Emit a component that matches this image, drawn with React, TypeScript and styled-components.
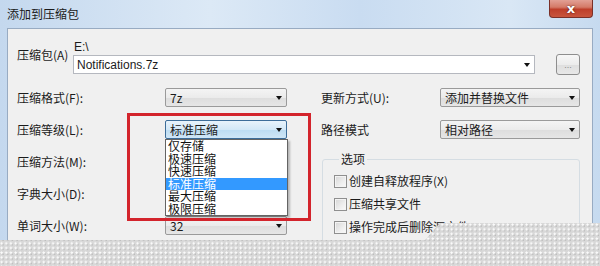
import styled, { createGlobalStyle } from 'styled-components'

const GlobalStyle = createGlobalStyle`
  body {
    margin: 0;
    font-family: "Noto Sans CJK SC", "Noto Sans", sans-serif;
  }
`

const Window = styled.div`
  position: relative;
  width: 600px;
  height: 266px;
  overflow: hidden;
  display: flex;
  flex-direction: column;
  font-size: 12px;
  color: #1b1b1b;
  background: linear-gradient(90deg, #c4d8ee 0%, #dce9f6 35%, #c9dcf1 60%, #d9e7f5 85%, #c6daef 100%);
`

const TitleBar = styled.div`
  height: 28px;
  flex-shrink: 0;
  display: flex;
  align-items: flex-start;
  justify-content: space-between;
  padding: 0 7px;
  box-sizing: border-box;
`

const Title = styled.div`
  margin-top: 7px;
  line-height: 14px;
  color: #1a1a1a;
`

const CloseButton = styled.div`
  width: 44px;
  height: 18px;
  box-sizing: border-box;
  border: 1px solid #7a3028;
  border-top: none;
  border-radius: 0 0 4px 4px;
  background: linear-gradient(#e2a095 0%, #d47a68 42%, #be3f2b 55%, #c8553d 100%);
  display: flex;
  align-items: center;
  justify-content: center;
  color: #fff;
  font-family: "DejaVu Sans", sans-serif;
  font-weight: bold;
  font-size: 13px;
  line-height: 12px;
  text-shadow: 0 0 2px #3a0d08;
`

const Panel = styled.div`
  flex: 1;
  margin: 0 7px;
  border: 1px solid #98abc2;
  border-bottom: none;
  background: #f0f0f0;
  padding: 11px 12px 0 9px;
  box-sizing: border-box;
  display: flex;
  flex-direction: column;
`

const ArchiveRow = styled.div`
  display: flex;
  align-items: flex-start;
`

const ArchiveLabel = styled.div`
  width: 56px;
  margin-top: 8px;
  line-height: 14px;
`

const ArchiveField = styled.div`
  flex: 1;
  margin-right: 21px;
  display: flex;
  flex-direction: column;
`

const PathText = styled.div`
  line-height: 14px;
  padding-left: 1px;
  font-family: "Liberation Sans", sans-serif;
`

const Combo = styled.div<{ $focus?: boolean; $editable?: boolean }>`
  position: relative;
  height: 19px;
  box-sizing: border-box;
  display: flex;
  align-items: center;
  justify-content: space-between;
  padding: 0 4px 0 4px;
  border: 1px solid ${(p) => (p.$focus ? '#3d6d99' : p.$editable ? '#b5b8bf' : '#9a9a9a')};
  border-radius: ${(p) => (p.$editable ? '0' : '2px')};
  background: ${(p) =>
    p.$editable
      ? '#fff'
      : p.$focus
        ? 'linear-gradient(#e8f3fb 0%, #d3e8f7 50%, #bcdcf2 51%, #cfe6f6 100%)'
        : 'linear-gradient(#f4f4f4 0%, #ebebeb 50%, #dddddd 51%, #e6e6e6 100%)'};
  line-height: 14px;
  white-space: nowrap;
`

const ArchiveCombo = styled(Combo)`
  margin-top: 1px;
  padding-left: 3px;
  font-family: "Liberation Sans", sans-serif;
`

const Arrow = styled.span`
  width: 0;
  height: 0;
  border-left: 3.5px solid transparent;
  border-right: 3.5px solid transparent;
  border-top: 4px solid #111;
`

const BrowseButton = styled.div`
  width: 24px;
  height: 21px;
  margin-top: 14px;
  box-sizing: border-box;
  border: 1px solid #8e8e8e;
  border-radius: 3px;
  background: linear-gradient(#f7f7f7 0%, #ececec 50%, #dedede 51%, #e8e8e8 100%);
  display: flex;
  align-items: center;
  justify-content: center;
  color: #8a8a8a;
  font-size: 9px;
  font-family: "Liberation Sans", sans-serif;
`

const Columns = styled.div`
  margin-top: 13px;
  display: flex;
  align-items: flex-start;
`

const LeftCol = styled.div`
  width: 270px;
  display: grid;
  row-gap: 13px;
`

const RightCol = styled.div`
  flex: 1;
  margin-left: 34px;
  display: flex;
  flex-direction: column;
  gap: 13px;
`

const FormRow = styled.div<{ $labelWidth: number }>`
  display: grid;
  grid-template-columns: ${(p) => p.$labelWidth}px 1fr;
  align-items: center;
  height: 19px;
`

const Label = styled.div`
  line-height: 14px;
  white-space: nowrap;
`

const SelectWrap = styled.div`
  position: relative;
`

const DropList = styled.div`
  position: absolute;
  z-index: 2;
  top: 19px;
  left: 0;
  width: 123px;
  box-sizing: border-box;
  border: 1px solid #646464;
  background: #fff;
  box-shadow: 2px 2px 2px rgba(0, 0, 0, 0.25);
  display: flex;
  flex-direction: column;
`

const DropItem = styled.div<{ $selected?: boolean }>`
  height: 12.5px;
  line-height: 12.5px;
  padding-left: 2px;
  color: ${(p) => (p.$selected ? '#fff' : '#111')};
  background: ${(p) => (p.$selected ? '#3399ff' : 'transparent')};
`

const GroupBox = styled.fieldset`
  margin: 0 0 0 1px;
  padding: 8px 11px 30px;
  border: 1px solid #d5dde3;
  border-radius: 3px;
  display: flex;
  flex-direction: column;
  gap: 9px;
`

const Legend = styled.legend`
  padding: 0 2px;
  margin-left: 5px;
  line-height: 14px;
`

const CheckRow = styled.label`
  display: flex;
  align-items: center;
  gap: 2px;
  height: 14px;
  line-height: 14px;
  white-space: nowrap;
`

const CheckBox = styled.span`
  width: 13px;
  height: 13px;
  box-sizing: border-box;
  border: 1px solid #8f8f8f;
  background: linear-gradient(135deg, #d6d6d6 0%, #eeeeee 60%, #fafafa 100%);
  box-shadow: inset 0 0 0 1px #f4f4f4;
`

const Annotation = styled.div`
  position: absolute;
  z-index: 3;
  left: 127px;
  top: 113px;
  width: 184px;
  height: 108px;
  box-sizing: border-box;
  border: 3px solid #d3242c;
  pointer-events: none;
`

const Fade = styled.div`
  position: absolute;
  z-index: 4;
  left: 0;
  right: 0;
  top: 223px;
  bottom: 0;
  background-color: #d8d8d8;
  background-image:
    radial-gradient(circle at 1.5px 1.5px, #fbfbfb 0.9px, transparent 1.3px),
    radial-gradient(circle at 3px 3px, #b9b9b9 0.5px, transparent 0.9px);
  background-size: 4.7px 4.7px;
  clip-path: polygon(0 17px, 425px 17px, 440px 0, 100% 0, 100% 100%, 0 100%);
`

const levels = ['仅存储', '极速压缩', '快速压缩', '标准压缩', '最大压缩', '极限压缩']

export default function App() {
  return (
    <>
      <GlobalStyle />
      <Window>
        <TitleBar>
          <Title>添加到压缩包</Title>
          <CloseButton>x</CloseButton>
        </TitleBar>
        <Panel>
          <ArchiveRow>
            <ArchiveLabel>压缩包(A)</ArchiveLabel>
            <ArchiveField>
              <PathText>E:\</PathText>
              <ArchiveCombo $editable>
                <span>Notifications.7z</span>
                <Arrow />
              </ArchiveCombo>
            </ArchiveField>
            <BrowseButton>...</BrowseButton>
          </ArchiveRow>
          <Columns>
            <LeftCol>
              <FormRow $labelWidth={148}>
                <Label>压缩格式(F):</Label>
                <Combo>
                  <span>7z</span>
                  <Arrow />
                </Combo>
              </FormRow>
              <FormRow $labelWidth={148}>
                <Label>压缩等级(L):</Label>
                <SelectWrap>
                  <Combo $focus>
                    <span>标准压缩</span>
                    <Arrow />
                  </Combo>
                  <DropList>
                    {levels.map((l) => (
                      <DropItem key={l} $selected={l === '标准压缩'}>
                        {l}
                      </DropItem>
                    ))}
                  </DropList>
                </SelectWrap>
              </FormRow>
              <FormRow $labelWidth={148}>
                <Label>压缩方法(M):</Label>
                <Combo />
              </FormRow>
              <FormRow $labelWidth={148}>
                <Label>字典大小(D):</Label>
                <Combo />
              </FormRow>
              <FormRow $labelWidth={148}>
                <Label>单词大小(W):</Label>
                <Combo>
                  <span>32</span>
                  <Arrow />
                </Combo>
              </FormRow>
            </LeftCol>
            <RightCol>
              <FormRow $labelWidth={119}>
                <Label>更新方式(U):</Label>
                <Combo>
                  <span>添加并替换文件</span>
                  <Arrow />
                </Combo>
              </FormRow>
              <FormRow $labelWidth={119}>
                <Label>路径模式</Label>
                <Combo>
                  <span>相对路径</span>
                  <Arrow />
                </Combo>
              </FormRow>
              <GroupBox>
                <Legend>选项</Legend>
                <CheckRow>
                  <CheckBox />
                  创建自释放程序(X)
                </CheckRow>
                <CheckRow>
                  <CheckBox />
                  压缩共享文件
                </CheckRow>
                <CheckRow>
                  <CheckBox />
                  操作完成后删除源文件
                </CheckRow>
              </GroupBox>
            </RightCol>
          </Columns>
        </Panel>
        <Annotation />
        <Fade />
      </Window>
    </>
  )
}
